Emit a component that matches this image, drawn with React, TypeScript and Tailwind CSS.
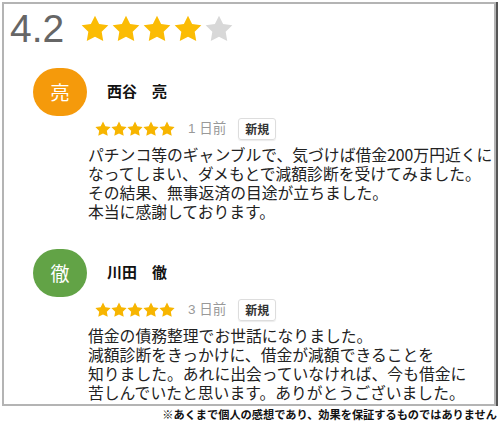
import React from "react";

const STAR = "M12 2l3.09 6.26L22 9.27l-5 4.87 1.18 6.88L12 17.77l-6.18 3.25L7 14.14 2 9.27l6.91-1.01L12 2z";

const Star = ({ size, color }: { size: number; color: string }) => (
  <svg width={size} height={size} viewBox="1.5 1.5 21 21" className="block">
    <path d={STAR} fill={color} />
  </svg>
);

const reviews = [
  {
    initial: "亮",
    avatar: "bg-[#f59a0b]",
    name: "西谷　亮",
    when: "1 日前",
    lines: [
      "パチンコ等のギャンブルで、気づけば借金200万円近くに",
      "なってしまい、ダメもとで減額診断を受けてみました。",
      "その結果、無事返済の目途が立ちました。",
      "本当に感謝しております。",
    ],
  },
  {
    initial: "徹",
    avatar: "bg-[#62a346]",
    name: "川田　徹",
    when: "3 日前",
    lines: [
      "借金の債務整理でお世話になりました。",
      "減額診断をきっかけに、借金が減額できることを",
      "知りました。あれに出会っていなければ、今も借金に",
      "苦しんでいたと思います。ありがとうございました。",
    ],
  },
];

const Review = ({ r }: { r: (typeof reviews)[number] }) => (
  <div className="flex flex-col">
    <div className="flex items-center gap-[20px]">
      <div className={`w-[54px] h-[48px] rounded-full ${r.avatar} flex items-center justify-center text-white text-[19px]`}>
        {r.initial}
      </div>
      <div className="text-[15px] font-bold text-[#111] mb-[2px]">{r.name}</div>
    </div>
    <div className="flex items-center pl-[62px] mt-[2px] h-[22px]">
      <div className="flex">
        {[0, 1, 2, 3, 4].map((i) => (
          <Star key={i} size={16} color="#f7b500" />
        ))}
      </div>
      <span className="ml-[13px] text-[13.5px] text-[#999] font-['Liberation_Sans','Noto_Sans_CJK_JP',sans-serif]">{r.when}</span>
      <span className="ml-[12px] h-[22px] px-[6px] flex items-center border border-[#ddd] rounded-[3px] text-[12px] font-bold text-[#333] shadow-[0_1px_1px_rgba(0,0,0,0.08)]">
        新規
      </span>
    </div>
    <p className="pl-[55px] mt-[5px] text-[15.8px] leading-[19px] text-[#222] whitespace-nowrap">
      {r.lines.map((l, i) => (
        <React.Fragment key={i}>
          {l}
          {i < r.lines.length - 1 && <br />}
        </React.Fragment>
      ))}
    </p>
  </div>
);

export default function App() {
  return (
    <div className="w-[500px] h-[423px] bg-white font-['Noto_Sans_CJK_JP',sans-serif] overflow-hidden">
      <div className="ml-[2px] mt-[2px] w-[494px] h-[404px] border-2 border-[#b4b4b4] shadow-[2px_0_0_#555] overflow-hidden">
        <div className="flex items-center pl-[6px] pt-[5px]">
          <span className="text-[39px] leading-[40px] text-[#666] font-['Liberation_Sans',sans-serif]">4.2</span>
          <div className="flex gap-[3px] ml-[17px]">
            {[0, 1, 2, 3].map((i) => (
              <Star key={i} size={28} color="#fbbc04" />
            ))}
            <Star size={28} color="#d8d8d8" />
          </div>
        </div>
        <div className="pl-[29px] mt-[19px] flex flex-col gap-[28px]">
          {reviews.map((r, i) => (
            <Review key={i} r={r} />
          ))}
        </div>
      </div>
      <div className="w-[497px] text-right text-[11.2px] leading-[15px] font-semibold text-[#111] mt-[1px]">
        ※あくまで個人の感想であり、効果を保証するものではありません
      </div>
    </div>
  );
}
